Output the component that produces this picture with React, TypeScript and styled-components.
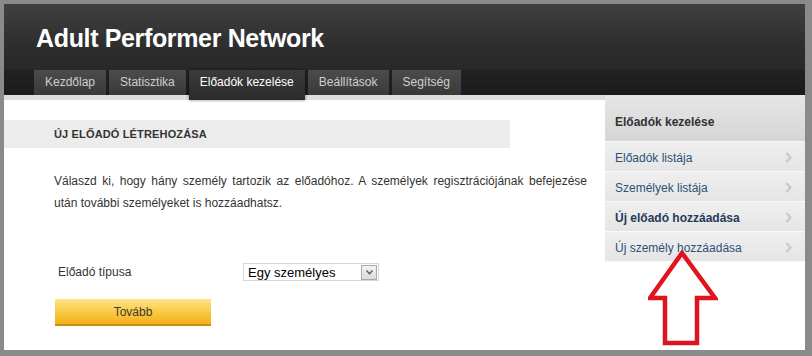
import React from 'react';
import styled, { createGlobalStyle } from 'styled-components';

const GlobalStyle = createGlobalStyle`
  html, body {
    margin: 0;
    padding: 0;
    background: #8a8a8a;
  }
  body {
    font-family: 'Liberation Sans', Arial, sans-serif;
  }
  * {
    box-sizing: border-box;
  }
`;

const tabs = ['Kezdőlap', 'Statisztika', 'Előadók kezelése', 'Beállítások', 'Segítség'];
const sideLinks = [
  { label: 'Előadók listája', current: false },
  { label: 'Személyek listája', current: false },
  { label: 'Új előadó hozzáadása', current: true },
  { label: 'Új személy hozzáadása', current: false }
];

const Chevron = () => (
  <svg width="7" height="11" viewBox="0 0 7 11">
    <polyline points="1.5,1 5.5,5.5 1.5,10" fill="none" stroke="#c9c9c9" strokeWidth="2.4" />
  </svg>
);

const UpArrow = () => (
  <ArrowMark width="70" height="96" viewBox="0 0 70 96">
    <polygon
      points="34,3 67,48 49,48 49,93 17,93 17,48 2,48"
      fill="none"
      stroke="#e0141f"
      strokeWidth="4.5"
      strokeLinejoin="miter"
    />
  </ArrowMark>
);

const App = () => {
  return (
    <Frame>
      <GlobalStyle />
      <Header>
        <Title>Adult Performer Network</Title>
        <Nav>
          {tabs.map((t) => (
            <Tab key={t} active={t === 'Előadók kezelése'}>
              {t}
            </Tab>
          ))}
        </Nav>
      </Header>
      <Body>
        <Main>
          <SectionHead>Új előadó létrehozása</SectionHead>
          <Intro>
            Válaszd ki, hogy hány személy tartozik az előadóhoz. A személyek regisztrációjának befejezése
            után további személyeket is hozzáadhatsz.
          </Intro>
          <FieldRow>
            <FieldLabel>Előadó típusa</FieldLabel>
            <Select>
              <span>Egy személyes</span>
              <SelectButton>
                <svg width="7" height="5" viewBox="0 0 7 5">
                  <polyline points="0.5,0.5 3.5,3.8 6.5,0.5" fill="none" stroke="#555" strokeWidth="1.3" />
                </svg>
              </SelectButton>
            </Select>
          </FieldRow>
          <NextButton>Tovább</NextButton>
        </Main>
        <Sidebar>
          <SideHead>Előadók kezelése</SideHead>
          {sideLinks.map((l) => (
            <SideItem key={l.label} current={l.current}>
              <span>{l.label}</span>
              <Chevron />
            </SideItem>
          ))}
          <UpArrow />
        </Sidebar>
      </Body>
    </Frame>
  );
};

export default App;

const Frame = styled.div`
  width: 812px;
  height: 356px;
  padding: 4px 7px 6px 4px;
  background: #8a8a8a;
  display: flex;
  flex-direction: column;
`;

const Header = styled.header`
  height: 91px;
  display: flex;
  flex-direction: column;
  justify-content: space-between;
  background: linear-gradient(to bottom, #404040 0%, #2e2e2e 45%, #232323 100%);
`;

const Title = styled.h1`
  margin: 0;
  padding: 19px 0 0 32px;
  font-size: 25px;
  line-height: 30px;
  font-weight: bold;
  color: #ffffff;
  letter-spacing: -0.35px;
`;

const Nav = styled.nav`
  height: 25px;
  display: flex;
  align-items: flex-start;
  gap: 3px;
  padding-left: 30px;
  background: linear-gradient(to bottom, #222222, #1b1b1b);
`;

const Tab = styled.div<{ active?: boolean }>`
  position: relative;
  z-index: 1;
  height: ${(p) => (p.active ? '30px' : '25px')};
  padding: 0 11px;
  font-size: 12px;
  line-height: 25px;
  color: ${(p) => (p.active ? '#ffffff' : '#cfcfcf')};
  background: ${(p) =>
    p.active
      ? 'linear-gradient(to bottom, #3b3b3b, #2b2b2b)'
      : 'linear-gradient(to bottom, #4c4c4c, #393939)'};
  box-shadow: ${(p) => (p.active ? '0 0 3px rgba(0,0,0,0.5)' : 'none')};
`;

const Body = styled.div`
  flex: 1;
  display: grid;
  grid-template-columns: 601px 200px;
  background: #ffffff;
`;

const Main = styled.main`
  border-top: 5px solid #dedede;
  padding-top: 20px;
`;

const SectionHead = styled.h2`
  margin: 0;
  width: 506px;
  height: 28px;
  padding-left: 50px;
  background: #ececec;
  font-size: 11px;
  line-height: 28px;
  font-weight: bold;
  text-transform: uppercase;
  letter-spacing: 0.15px;
  color: #333333;
`;

const Intro = styled.p`
  margin: 22px 18px 0 50px;
  font-size: 12px;
  line-height: 22px;
  text-align: justify;
  color: #333333;
`;

const FieldRow = styled.div`
  margin-top: 49px;
  padding-left: 54px;
  display: grid;
  grid-template-columns: 185px 136px;
  align-items: center;
`;

const FieldLabel = styled.label`
  font-size: 12px;
  color: #333333;
`;

const Select = styled.div`
  height: 18px;
  display: flex;
  align-items: center;
  justify-content: space-between;
  padding: 0 1px 0 4px;
  border: 1px solid #d6d6d6;
  font-size: 13px;
  color: #000000;
`;

const SelectButton = styled.span`
  width: 16px;
  height: 15px;
  display: flex;
  align-items: center;
  justify-content: center;
  background: linear-gradient(to bottom, #f2f2f2, #dcdcdc);
  border: 1px solid #a9a9a9;
`;

const NextButton = styled.button`
  display: block;
  margin: 18px 0 0 51px;
  width: 156px;
  height: 27px;
  border: 0;
  border-bottom: 2px solid #c98b12;
  background: linear-gradient(to bottom, #fde48a 0%, #f9cb45 50%, #f3b019 100%);
  font-family: inherit;
  font-size: 12px;
  color: #3a3a3a;
`;

const Sidebar = styled.aside`
  position: relative;
  background: #ffffff;
`;

const SideHead = styled.div`
  height: 47px;
  padding-left: 10px;
  background: linear-gradient(to bottom, #e6e6e6, #d5d5d5);
  border-bottom: 1px solid #f4f4f4;
  font-size: 12px;
  font-weight: bold;
  line-height: 54px;
  color: #333333;
`;

const SideItem = styled.div<{ current?: boolean }>`
  height: 30px;
  display: flex;
  align-items: center;
  justify-content: space-between;
  padding: 2px 13px 0 10px;
  background: linear-gradient(to bottom, #efefef, #e5e5e5);
  border-bottom: 1px solid #fafafa;
  font-size: 12px;
  font-weight: ${(p) => (p.current ? 'bold' : 'normal')};
  color: ${(p) => (p.current ? '#1f3b5c' : '#2d5177')};
`;

const ArrowMark = styled.svg`
  position: absolute;
  left: 43px;
  top: 155px;
`;
